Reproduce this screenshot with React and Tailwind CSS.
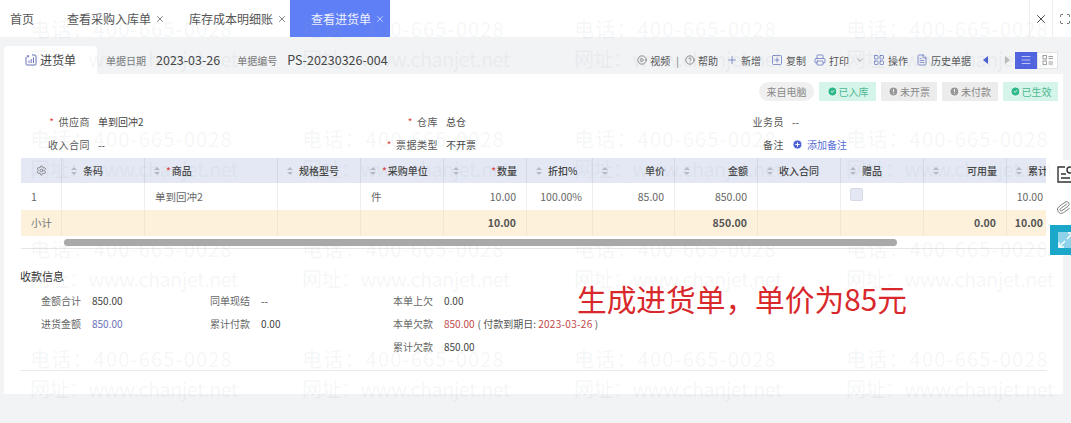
import {
  X, Scan, CirclePlay, CircleHelp, Plus, SquarePlus, Printer, ChevronDown,
  LayoutGrid, FileText, Settings, Paperclip, Menu,
  CircleCheck, CircleAlert, PlusCircle,
} from "lucide-react";

const font = "font-['Noto_Sans_CJK_SC','Noto_Sans',sans-serif]";

const tabs = [
  { label: "查看采购入库单", width: "w-[122px]" },
  { label: "库存成本明细账", width: "w-[122px]" },
];

const tags = [
  { label: "已入库", ok: true, width: "w-[57px]" },
  { label: "未开票", ok: false, width: "w-[56px]" },
  { label: "未付款", ok: false, width: "w-[56px]" },
  { label: "已生效", ok: true, width: "w-[55px]" },
];

const columns = "grid-cols-[41px_83px_133px_83px_83px_83px_66px_82px_83px_83px_83px_83px_40px]";

const headers = [
  { label: "条码" },
  { label: "商品", required: true },
  { label: "规格型号" },
  { label: "采购单位", required: true },
  { label: "数量", required: true, right: true },
  { label: "折扣%" },
  { label: "单价", right: true },
  { label: "金额", right: true },
  { label: "收入合同" },
  { label: "赠品" },
  { label: "可用量", right: true },
  { label: "累计" },
];

const row = ["1", "", "单到回冲2", "", "件", "10.00", "100.00%", "85.00", "850.00", "", "", "", "10.00"];
const totals = ["小计", "", "", "", "", "10.00", "", "", "850.00", "", "", "0.00", "10.00"];
const rightCols = [5, 6, 7, 8, 11, 12];

const SortMark = () => (
  <span className="flex flex-col gap-[2px] shrink-0">
    <span className="w-0 h-0 border-x-[3px] border-x-transparent border-b-[3px] border-b-[#b4bac6]" />
    <span className="w-0 h-0 border-x-[3px] border-x-transparent border-t-[3px] border-t-[#b4bac6]" />
  </span>
);

const Field = ({ label, required, children }) => (
  <div className="flex items-center gap-2 h-[23px]">
    <span className="w-[90px] text-right text-[10px] text-[#555] whitespace-nowrap tracking-[0.5px]">
      {required && <span className="text-[#e0443e] mr-1">*</span>}
      {label}
    </span>
    <span className="text-[10px] text-[#444] flex items-center gap-1 whitespace-nowrap">{children}</span>
  </div>
);

const Pay = ({ label, children }) => (
  <div className="flex items-center h-[23px] text-[10px] whitespace-nowrap">
    <span className="text-[#666]">{label}</span>
    <span className="ml-[11px] text-[#444]">{children}</span>
  </div>
);

const Tool = ({ icon: Icon, label, color = "text-[#5a6ab8]", className = "" }) => (
  <span className={`flex items-center gap-[3px] text-[10px] text-[#555] whitespace-nowrap ${className}`}>
    <Icon className={`w-[12px] h-[12px] ${color}`} strokeWidth={1.4} />
    {label}
  </span>
);

const BillIcon = () => (
  <svg viewBox="0 0 12 12" className="w-[12px] h-[12px] text-[#6b74b8]" fill="none" stroke="currentColor" strokeWidth="1">
    <path d="M1 3v7a1 1 0 0 0 1 1h8a1 1 0 0 0 1-1V2a1 1 0 0 0-1-1H7" />
    <path d="M4 9V6.5M6.2 9V5M8.5 9V3.5M3 1v2.5M1.8 2.2h2.4" />
  </svg>
);

const ListGridIcon = () => (
  <svg viewBox="0 0 12 12" className="w-[12px] h-[12px] text-[#999]" fill="none" stroke="currentColor" strokeWidth="0.9">
    <rect x="1" y="1.5" width="3.5" height="3.5" />
    <rect x="1" y="7" width="3.5" height="3.5" />
    <path d="M6.5 2.5h4.5M6.5 4.5h4.5M6.5 8h4.5M6.5 10h4.5" />
  </svg>
);

const DocSearchIcon = () => (
  <svg viewBox="0 0 20 20" className="w-[20px] h-[20px] text-[#333] shrink-0" fill="none" stroke="currentColor" strokeWidth="1.4">
    <path d="M9 2H2v15h15v-7" />
    <path d="M5 9h5M5 13h9" />
    <circle cx="14" cy="5" r="3" />
  </svg>
);

const ExpandIcon = () => (
  <svg viewBox="0 0 20 20" className="w-[20px] h-[20px] shrink-0" fill="none" stroke="#fff" strokeWidth="1.3">
    <rect x="2" y="2" width="16" height="16" fill="#8fd3ea" stroke="none" />
    <path d="M12 3h5v5M17 3l-6 6M8 17H3v-5M3 17l6-6" />
  </svg>
);

const Watermark = () => (
  <div className="absolute inset-0 overflow-hidden pointer-events-none pt-[14px] pl-[30px]">
    {[0, 1, 2, 3].map((r) => (
      <div key={r} className="h-[110px] grid grid-cols-[272px_272px_272px_272px] text-[20px] leading-[30px] text-[#9aa0aa]/10">
        {[0, 1, 2, 3].map((c) => (
          <div key={c} className="whitespace-nowrap">
            <div className="tracking-[1.2px]">电话：400-665-0028</div>
            <div className="tracking-[-0.6px]">网址：www.chanjet.net</div>
          </div>
        ))}
      </div>
    ))}
  </div>
);

export default function App() {
  return (
    <div className={`relative w-[1071px] h-[423px] overflow-hidden bg-[#f1f3f5] ${font}`}>
      {/* top tabs */}
      <div className="h-[37px] bg-white flex items-stretch text-[12px] text-[#555]">
        <div className="w-[45px] pl-[10px] flex items-center">首页</div>
        <div className="flex pl-[12px]">
          {tabs.map((t) => (
            <div key={t.label} className={`${t.width} pl-[10px] flex items-center gap-[4px] whitespace-nowrap`}>
              {t.label}
              <X className="w-[10px] h-[10px] text-[#444]" strokeWidth={1.6} />
            </div>
          ))}
        </div>
        <div className="w-[100px] ml-[-11px] bg-[#5f7ff6] text-white/90 flex items-center pl-[21px] gap-[4px]">
          查看进货单
          <X className="w-[10px] h-[10px]" strokeWidth={1.6} />
        </div>
        <div className="ml-auto flex">
          <div className="w-[24px] border-x border-[#eeeeee] flex items-center justify-center">
            <X className="w-[14px] h-[14px] text-[#333]" strokeWidth={1.5} />
          </div>
          <div className="w-[18px] flex items-center justify-end">
            <Scan className="w-[12px] h-[12px] text-[#333]" strokeWidth={1.5} />
          </div>
        </div>
      </div>

      {/* bill header */}
      <div className="h-[37px] pl-[4px] pr-[13px] flex items-end">
        <div className="w-[93px] h-[28px] bg-white rounded-t-[4px] flex items-center justify-center gap-[3px] text-[12px] text-[#444]">
          <BillIcon />
          进货单
        </div>
        <div className="h-[28px] flex items-center flex-1 pl-[9px]">
          <span className="text-[10px] text-[#777] whitespace-nowrap">单据日期</span>
          <span className="ml-[10px] text-[12.5px] text-[#444] whitespace-nowrap">2023-03-26</span>
          <span className="ml-[17px] text-[10px] text-[#777] whitespace-nowrap">单据编号</span>
          <span className="ml-[10px] text-[12.5px] text-[#444] whitespace-nowrap">PS-20230326-004</span>
          <div className="ml-auto flex items-center gap-[8px]">
            <span className="flex items-center gap-[3px] text-[10px] text-[#555] whitespace-nowrap">
              <CirclePlay className="w-[10px] h-[10px]" strokeWidth={1.5} />
              视频
              <span className="mx-[3px] text-[#777]">|</span>
              <CircleHelp className="w-[10px] h-[10px]" strokeWidth={1.5} />
              帮助
            </span>
            <Tool icon={Plus} label="新增" />
            <Tool icon={SquarePlus} label="复制" className="ml-[2px]" />
            <span className="flex items-center gap-[6px]">
              <Tool icon={Printer} label="打印" />
              <ChevronDown className="w-[10px] h-[10px] text-[#777]" strokeWidth={1.5} />
            </span>
            <Tool icon={LayoutGrid} label="操作" />
            <Tool icon={FileText} label="历史单据" />
            <span className="w-0 h-0 ml-[4px] border-y-[4px] border-y-transparent border-r-[5px] border-r-[#4a5fd0]" />
            <span className="w-0 h-0 ml-[9px] border-y-[4px] border-y-transparent border-l-[5px] border-l-[#bbb]" />
            <div className="flex ml-[-3px]">
              <span className="w-[22px] h-[17px] bg-[#4f63e0] flex items-center justify-center">
                <Menu className="w-[12px] h-[12px] text-[#dfe3fb]" strokeWidth={1.5} />
              </span>
              <span className="w-[21px] h-[17px] bg-white border border-[#e3e3e3] flex items-center justify-center">
                <ListGridIcon />
              </span>
            </div>
          </div>
        </div>
      </div>

      {/* bill body */}
      <div className="ml-[4px] w-[1059px] h-[320px] bg-white">
        <div className="flex justify-end items-center gap-[5px] pt-[6px] pr-[5px] h-[29px]">
          <span className="w-[55px] h-[19px] rounded-full bg-[#f0f0f0] text-[10px] text-[#888] flex items-center justify-center">来自电脑</span>
          {tags.map((t) => (
            <span
              key={t.label}
              className={`${t.width} h-[19px] flex items-center justify-center gap-[1px] text-[10px] ${t.ok ? "bg-[#d6f5ea] text-[#4fb892]" : "bg-[#ececec] text-[#888]"}`}
            >
              {t.ok ? <CircleCheck className="w-[11px] h-[11px] fill-[#2fb98a] text-white" /> : <CircleAlert className="w-[11px] h-[11px] fill-[#999] text-white" />}
              {t.label}
            </span>
          ))}
        </div>

        {/* form */}
        <div className="-ml-[4px] mt-[7px] grid grid-cols-[348px_346px_1fr]">
          <Field label="供应商" required>单到回冲2</Field>
          <Field label="仓库" required>总仓</Field>
          <Field label="业务员">--</Field>
          <Field label="收入合同">--</Field>
          <Field label="票据类型" required>不开票</Field>
          <Field label="备注">
            <PlusCircle className="w-[11px] h-[11px] fill-[#4f63d8] text-white" />
            <span className="text-[#5a6fd8]">添加备注</span>
          </Field>
        </div>

        {/* table */}
        <div className="ml-[17px] mt-[2px] w-[1025px] overflow-hidden">
          <div className={`grid ${columns} h-[25px] bg-[#e3e8f4] text-[10px] font-medium text-[#444]`}>
            <div className="flex items-center justify-center border-r border-[#d3d8e4]">
              <Settings className="w-[11px] h-[11px] text-[#666]" strokeWidth={1.5} />
            </div>
            {headers.map((h) => (
              <div key={h.label} className="flex items-center gap-[6px] px-[9px] border-r border-[#d3d8e4] whitespace-nowrap">
                <SortMark />
                <span className={h.right ? "ml-auto" : ""}>
                  {h.required && <span className="text-[#e0443e] mr-[1px]">*</span>}
                  {h.label}
                </span>
              </div>
            ))}
          </div>
          <div className={`grid ${columns} h-[27px] text-[10.5px] text-[#666]`}>
            {row.map((v, i) => (
              <div key={i} className={`flex items-center whitespace-nowrap border-r border-[#eeeeee] ${i === 12 ? "pr-[3px]" : "pr-[10px]"} ${i === 10 ? "pl-[9px]" : "pl-[10px]"} ${rightCols.includes(i) ? "justify-end" : ""}`}>
                {i === 10 ? <span className="w-[13px] h-[13px] -mt-[4px] rounded-[2px] bg-[#e3e8f4] border border-[#d5dae6]" /> : v}
              </div>
            ))}
          </div>
          <div className={`grid ${columns} h-[26px] bg-[#fdf1dc] text-[10.5px]`}>
            {totals.map((v, i) => (
              <div key={i} className={`flex items-center whitespace-nowrap border-r border-[#f1e6d0] ${i === 12 ? "pr-[3px]" : "pr-[10px]"} pl-[10px] ${rightCols.includes(i) ? "justify-end font-bold text-[#555]" : "text-[#777]"}`}>
                {v}
              </div>
            ))}
          </div>
        </div>
        <div className="ml-[17px] mt-[3px] w-[1025px] h-[10px] border-b border-[#e6e6e6]">
          <div className="ml-[43px] w-[833px] h-[7px] rounded-full bg-[#a9a9a9]" />
        </div>

        {/* payment */}
        <div className="ml-[16px] mt-[19px] text-[11px] text-[#333]">收款信息</div>
        <div className="ml-[37px] mt-[4px] h-[69px] grid grid-cols-[169px_183px_1fr] grid-rows-[23px_23px_23px]">
          <Pay label="金额合计">850.00</Pay>
          <Pay label="同单现结">--</Pay>
          <Pay label="本单上欠">0.00</Pay>
          <Pay label="进货金额"><span className="text-[#6a70b8]">850.00</span></Pay>
          <Pay label="累计付款">0.00</Pay>
          <Pay label="本单欠款">
            <span className="text-[#c0474a]">850.00</span>
            <span className="ml-[3px] text-[#555]">( 付款到期日: </span>
            <span className="text-[#c0474a] tracking-[0.3px]">2023-03-26</span>
            <span className="text-[#555]"> )</span>
          </Pay>
          <div />
          <div />
          <Pay label="累计欠款">850.00</Pay>
        </div>
        <div className="mx-[16px] mt-[12px] border-b border-[#e9e9e9]" />
      </div>

      <Watermark />

      {/* side buttons */}
      <div className="absolute right-0 top-[160px] w-[21px] flex flex-col overflow-hidden">
        <div className="h-[30px] bg-white rounded-l-[3px] flex items-center pl-[6px]">
          <DocSearchIcon />
        </div>
        <div className="h-[35px] bg-white flex items-center pl-[6px]">
          <Paperclip className="w-[15px] h-[15px] shrink-0 text-[#777] rotate-[10deg]" strokeWidth={1.4} />
        </div>
        <div className="h-[30px] bg-[#1aa7c9] flex items-center pl-[6px]">
          <ExpandIcon />
        </div>
      </div>

      {/* annotation over the page */}
      <div className="absolute left-[577px] top-[279px] text-[29.7px] leading-[40px] text-[#d8282c] whitespace-nowrap">
        生成进货单，单价为85元
      </div>
    </div>
  );
}
